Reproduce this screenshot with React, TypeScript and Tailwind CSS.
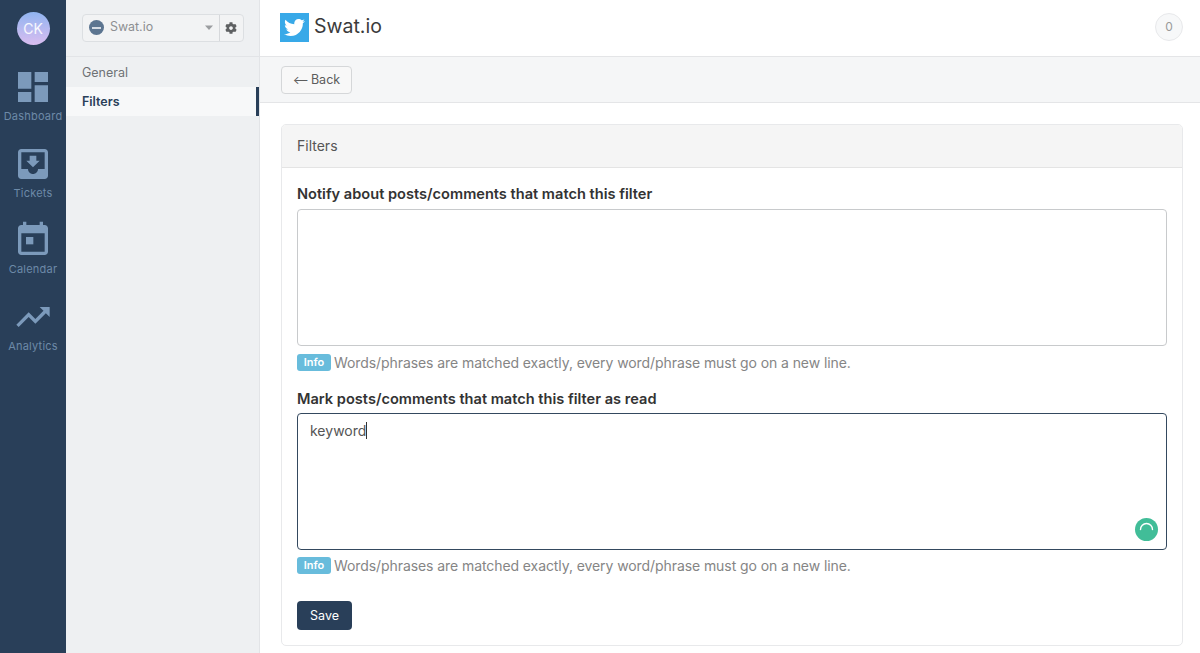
import { FaCog, FaTwitter } from 'react-icons/fa';
import { MdDashboard, MdMoveToInbox, MdTrendingUp } from 'react-icons/md';

function CalendarIcon({ className }: { className?: string }) {
  return (
    <svg className={className} viewBox="0 0 24 24" fill="currentColor">
      <path fillRule="evenodd" d="M19 3h-1V1h-2v2H8V1H6v2H5c-1.1 0-2 .9-2 2v14c0 1.1.9 2 2 2h14c1.1 0 2-.9 2-2V5c0-1.1-.9-2-2-2zm0 16H5V8h14v11z" />
      <path d="M7.8 10.2h4.4v4.4H7.8z" />
    </svg>
  );
}

const NAV = [
  { label: 'Dashboard', Icon: MdDashboard },
  { label: 'Tickets', Icon: MdMoveToInbox },
  { label: 'Calendar', Icon: CalendarIcon },
  { label: 'Analytics', Icon: MdTrendingUp },
];

function Help({ className }: { className: string }) {
  return (
    <div className={`flex items-center h-[18px] gap-[3px] ${className}`}>
      <span className="bg-[#68bcdc] text-white text-[11px] font-semibold rounded-[3px] w-[34px] h-[17px] flex items-center justify-center">Info</span>
      <span className="text-[14px] text-[#858585] tracking-[-0.08px]">Words/phrases are matched exactly, every word/phrase must go on a new line.</span>
    </div>
  );
}

export default function App() {
  return (
    <div className="flex h-[653px] overflow-hidden bg-white text-[#333] font-['Inter',sans-serif]">
      {/* main rail */}
      <div className="w-[66px] shrink-0 bg-[#293f59] flex flex-col items-center pt-[12px]">
        <div className="w-[33px] h-[33px] rounded-full bg-gradient-to-b from-[#8fb4f0] to-[#d9bdf0] text-white/90 text-[14px] flex items-center justify-center">CK</div>
        <div className="flex flex-col items-center mt-[22px] gap-[20.5px]">
          {NAV.map(({ label, Icon }) => (
            <div key={label} className="flex flex-col items-center h-[56px]">
              <Icon className="text-[#7c9abb] w-[40px] h-[40px] shrink-0" />
              <span className="text-[11px] leading-[14px] mt-[2px] text-[#6d8aa8] tracking-[0.02em]">{label}</span>
            </div>
          ))}
        </div>
      </div>

      {/* secondary sidebar */}
      <div className="w-[194px] shrink-0 bg-[#eef0f2] border-r border-[#e2e4e7] flex flex-col">
        <div className="h-[57px] border-b border-[#e2e4e7] flex items-center pl-[16px] pb-[1px]">
          <div className="flex w-[162px] h-[28px] bg-[#f2f3f4] border border-[#dcdfe2] rounded-[4px]">
            <div className="flex items-center flex-1 pl-[6px] border-r border-[#d6d8db]">
              <div className="w-[15px] h-[15px] rounded-full bg-[#5c7590] flex items-center justify-center">
                <div className="w-[9px] h-[2px] bg-[#d5dce4]"></div>
              </div>
              <span className="text-[12.4px] text-[#8d8f92] ml-[6px]">Swat.io</span>
              <svg className="ml-auto mr-[5px]" width="10" height="6" viewBox="0 0 10 6"><path d="M1 0.5h8L5 5z" fill="#9b9da0" /></svg>
            </div>
            <div className="w-[23px] pr-[2px] flex items-center justify-center">
              <FaCog className="w-[12px] h-[12px] text-[#5e6062]" />
            </div>
          </div>
        </div>
        <div className="h-[30px] flex items-center pl-[16px] pt-[3px] text-[12.5px] text-[#6f7275]">General</div>
        <div className="h-[29px] flex items-center pl-[16px] pt-[2px] text-[12.5px] font-semibold text-[#293f59] bg-[#f7f8f9] border-r-[3px] border-[#293f59]">Filters</div>
      </div>

      {/* content */}
      <div className="flex-1 flex flex-col min-w-0">
        <div className="h-[57px] shrink-0 border-b border-[#e4e5e7] flex items-center pl-[20px] pr-[17px] pb-[2px]">
          <div className="w-[29px] h-[29px] bg-[#38a9e8] flex items-center justify-center">
            <FaTwitter className="text-white w-[21px] h-[21px]" />
          </div>
          <span className="ml-[5px] text-[19.5px] text-[#3b3b3b]">Swat.io</span>
          <div className="ml-auto w-[28px] h-[28px] rounded-full bg-[#f7f8f9] border border-[#e8e9eb] text-[12px] text-[#9a9a9a] flex items-center justify-center">0</div>
        </div>

        <div className="h-[46px] shrink-0 bg-[#f5f6f7] border-b border-[#e4e5e7] flex items-center pl-[21px]">
          <button className="w-[71px] h-[28px] pt-[1px] bg-[#f8f8f8] border border-[#d5d7d9] rounded-[4px] text-[12.5px] text-[#5c5c5c] flex items-center justify-center gap-[2px]">
            <span className="text-[12px] leading-none">⟵</span>
            Back
          </button>
        </div>

        <div className="pl-[21px] pr-[17px] pt-[21px]">
          <div className="border border-[#e8e9eb] rounded-[5px] h-[522px] overflow-hidden">
            <div className="h-[43px] pb-[1px] bg-[#f5f5f5] border-b border-[#e4e4e4] flex items-center pl-[15px] text-[14px] text-[#555]">Filters</div>
            <div className="px-[15px] pt-[17px]">
              <div className="text-[14.6px] leading-[18px] font-semibold text-[#333]">Notify about posts/comments that match this filter</div>
              <div className="mt-[6px] h-[137px] border border-[#c8cacc] rounded-[4px]"></div>
              <Help className="mt-[7px]" />
              <div className="mt-[19px] text-[14.6px] leading-[18px] font-semibold text-[#333]">Mark posts/comments that match this filter as read</div>
              <div className="relative mt-[5px] h-[137px] border border-[#34495f] rounded-[4px] pl-[12px] pt-[8px] text-[14px] leading-[18px] text-[#555]">
                <span className="border-r border-[#333]">keyword</span>
                <div className="absolute right-[8px] bottom-[8px] w-[23px] h-[23px] rounded-full bg-[#41bd98]">
                  <svg width="23" height="23" viewBox="0 0 23 23" fill="none"><path d="M5.5 11.5 A6 6 0 0 1 17.5 11.5" stroke="#fff" strokeWidth="1.4" strokeLinecap="round" /></svg>
                </div>
              </div>
              <Help className="mt-[6px]" />
              <button className="mt-[27px] w-[55px] h-[29px] pt-[1px] bg-[#293f59] text-white text-[12.5px] rounded-[4px]">Save</button>
            </div>
          </div>
        </div>
      </div>
    </div>
  );
}
